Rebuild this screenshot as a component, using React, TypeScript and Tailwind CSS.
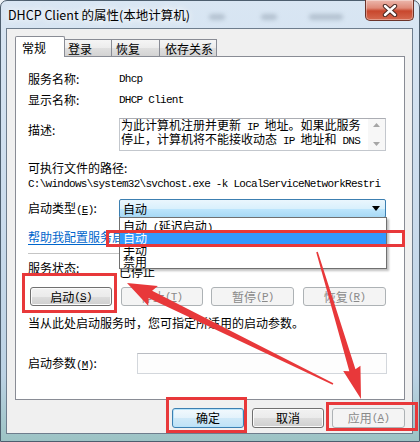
import React from "react";

const CJK = "font-['Noto_Sans_CJK_SC',sans-serif]";
const MONO = "font-['Liberation_Mono',monospace] text-[11px] tracking-[-0.73px]";

function Key({ k }: { k: string }) {
  return (
    <span className="font-['Liberation_Mono',monospace] text-[11px] tracking-[-0.8px]">
      (<span className="underline underline-offset-[1px]">{k}</span>)
    </span>
  );
}

function Btn({
  label,
  k,
  disabled,
  def,
  w,
}: {
  label: string;
  k?: string;
  disabled?: boolean;
  def?: boolean;
  w: string;
}) {
  const base =
    "flex items-center justify-center rounded-[3px] border text-[12px] leading-[16px] " + w;
  const style = disabled
    ? "border-[#adb2b5] bg-[#f4f4f4] text-[#8a8a8a]"
    : def
    ? "border-[#3c7fb1] bg-[linear-gradient(180deg,#f2f9fd_0%,#e3f2fb_50%,#cfe9f8_51%,#bfe2f6_100%)] text-black shadow-[inset_0_0_0_1px_#b8e3fa]"
    : "border-[#707070] bg-[linear-gradient(180deg,#f2f2f2_0%,#ebebeb_50%,#dddddd_51%,#cfcfcf_100%)] text-black shadow-[inset_0_0_0_1px_#fbfbfb]";
  return (
    <div className={base + " " + style}>
      <span>{label}</span>
      {k ? <Key k={k} /> : null}
    </div>
  );
}

function CloseButton() {
  return (
    <div className="-mt-px flex h-[21px] w-[49px] items-center justify-center rounded-b-[5px] border border-t-0 border-[#6b3329] bg-[linear-gradient(180deg,#ecb8ad_0%,#df8a78_40%,#c8472d_55%,#d5694f_100%)] shadow-[inset_0_0_0_1px_rgba(255,255,255,0.35)]">
      <svg width="16" height="13" viewBox="0 0 16 13">
        <path d="M3 2 L13 11 M13 2 L3 11" stroke="#4a2a24" strokeWidth="4.4" strokeLinecap="round" />
        <path d="M3 2 L13 11 M13 2 L3 11" stroke="#ffffff" strokeWidth="2.4" strokeLinecap="round" />
      </svg>
    </div>
  );
}

export default function App() {
  const arrow1 = (() => {
    const tx = 333,
      ty = 384,
      px = 127,
      py = 283;
    const L = Math.hypot(px - tx, py - ty);
    const ang = (Math.atan2(py - ty, px - tx) * 180) / Math.PI;
    const pts = `0,-0.8 ${L - 26},-4 ${L - 29},-11 ${L},0 ${L - 29},11 ${L - 26},4 0,0.8`;
    return { t: `translate(${tx} ${ty}) rotate(${ang})`, pts };
  })();
  const arrow2 = (() => {
    const tx = 317,
      ty = 252,
      px = 361,
      py = 399;
    const L = Math.hypot(px - tx, py - ty);
    const ang = (Math.atan2(py - ty, px - tx) * 180) / Math.PI;
    const pts = `0,-0.8 ${L - 30},-3.2 ${L - 32},-9 ${L},0 ${L - 32},9 ${L - 30},3.2 0,0.8`;
    return { t: `translate(${tx} ${ty}) rotate(${ang})`, pts };
  })();

  return (
    <div className={"relative h-[442px] w-[420px] overflow-hidden bg-[#eef3f7] " + CJK}>
      <div className="flex h-[442px] w-[420px] flex-col rounded-t-[7px] border border-[#4d5e6e] bg-[linear-gradient(180deg,#d9e6f3_0%,#cadbec_50%,#bcd2e4_85%,#9cc3c4_100%)]">
        {/* title bar */}
        <div className="flex h-[27px] items-start pl-[7px] pr-[5px]">
          <span className="mt-[6px] text-[12.5px] leading-[16px] text-black [text-shadow:0_0_6px_#ffffff,0_0_10px_#ffffff]">
            DHCP Client 的属性(本地计算机)
          </span>
          <div className="flex flex-1 items-start pl-[19px] pt-[13px]">
            <span className="h-[6px] w-[16px] rounded-[3px] bg-[#9aa9b8] opacity-60 blur-[2px]" />
            <span className="ml-[36px] h-[6px] w-[16px] rounded-[3px] bg-[#9aa9b8] opacity-60 blur-[2px]" />
            <span className="ml-[32px] h-[6px] w-[34px] rounded-[3px] bg-[#9aa9b8] opacity-60 blur-[2px]" />
          </div>
          <CloseButton />
        </div>

        {/* client area */}
        <div className="ml-[5px] flex h-[406px] w-[407px] flex-col border border-[#6e7d8d] bg-[#f0f0f0] pl-[8px] pr-[7px] pt-[7px] text-black">
          {/* tabs */}
          <div className="flex h-[20px] items-end text-[12px] leading-[16px]">
            <div className="relative z-10 -mb-px h-[21px] w-[50px] rounded-t-[2px] border border-b-0 border-[#898c95] bg-white pl-[6px] pt-[3px]">
              常规
            </div>
            <div className="h-[17px] w-[47px] border border-b-0 border-l-0 border-[#898c95] bg-[linear-gradient(180deg,#f5f5f5_0%,#ececec_50%,#dfdfdf_51%,#d3d3d3_100%)] pl-[3px] pt-[1px]">
              登录
            </div>
            <div className="h-[17px] w-[48px] border border-b-0 border-l-0 border-[#898c95] bg-[linear-gradient(180deg,#f5f5f5_0%,#ececec_50%,#dfdfdf_51%,#d3d3d3_100%)] pl-[4px] pt-[1px]">
              恢复
            </div>
            <div className="h-[17px] w-[57px] border border-b-0 border-l-0 border-[#898c95] bg-[linear-gradient(180deg,#f5f5f5_0%,#ececec_50%,#dfdfdf_51%,#d3d3d3_100%)] pl-[5px] pt-[1px]">
              依存关系
            </div>
          </div>

          {/* panel */}
          <div className="flex h-[344px] w-[390px] flex-col border border-[#898c95] bg-white pl-[12px] pr-[17px] text-[12px] leading-[16px]">
            <div className="mt-[14px] flex h-[16px] items-center">
              <span className="w-[91px]">服务名称:</span>
              <span className={MONO}>Dhcp</span>
            </div>
            <div className="mt-[5px] flex h-[16px] items-center">
              <span className="w-[91px]">显示名称:</span>
              <span className={MONO}>DHCP Client</span>
            </div>
            <div className="mt-[10px] flex h-[33px] items-start">
              <span className="mt-[4px] w-[91px]">描述:</span>
              <div className="flex h-[33px] w-[267px] border border-[#c3c7cd] border-t-[#abadb3] bg-white">
                <div className="flex-1 pl-[1px] text-[12px] leading-[12px]">
                  <div className="whitespace-nowrap">
                    为此计算机注册并更新<span className={MONO}> IP </span>地址。如果此服务
                  </div>
                  <div className="whitespace-nowrap">
                    停止，计算机将不能接收动态<span className={MONO}> IP </span>地址和<span className={MONO}> DNS</span>
                  </div>
                </div>
                <div className="flex w-[17px] flex-col items-center justify-between bg-[#f7f7f7] py-[4px]">
                  <svg width="7" height="4" viewBox="0 0 7 4">
                    <path d="M0 4 L3.5 0 L7 4 Z" fill="#a6a6a6" />
                  </svg>
                  <svg width="7" height="4" viewBox="0 0 7 4">
                    <path d="M0 0 L3.5 4 L7 0 Z" fill="#a6a6a6" />
                  </svg>
                </div>
              </div>
            </div>
            <div className="mt-[9px] h-[16px]">可执行文件的路径:</div>
            <div className={"h-[16px] w-[357px] overflow-hidden whitespace-nowrap leading-[16px] " + MONO}>
              C:\windows\system32\svchost.exe -k LocalServiceNetworkRestri
            </div>
            <div className="mt-[7px] flex h-[19px] items-center">
              <span className="w-[91px]">
                启动类型<Key k="E" />:
              </span>
              <div className="relative h-[19px] w-[267px]">
                <div className="flex h-[19px] w-[267px] items-center justify-between rounded-[2px] border border-[#3c7fb1] bg-[linear-gradient(180deg,#eaf6fd_0%,#d9f0fc_50%,#bee6fd_51%,#a7d9f5_100%)] pl-[3px] pr-[5px]">
                  <span>自动</span>
                  <svg width="8" height="5" viewBox="0 0 8 5">
                    <path d="M0 0 L8 0 L4 5 Z" fill="#000" />
                  </svg>
                </div>
                <div className="absolute left-0 top-[18px] z-20 flex h-[52px] w-[268px] flex-col border border-[#707070] bg-white text-[12px] leading-[12px] shadow-[2px_2px_2px_rgba(0,0,0,0.25)]">
                  <div className="h-[14px] pl-[3px] pt-[2px]">
                    自动<span className="font-['Liberation_Mono',monospace] text-[11px] tracking-[-0.8px]"> (</span>延迟启动<span className="font-['Liberation_Mono',monospace] text-[11px]">)</span>
                  </div>
                  <div className="h-[12px] bg-[#3399ff] pl-[3px] text-white">自动</div>
                  <div className="h-[12px] pl-[3px]">手动</div>
                  <div className="h-[12px] pl-[3px]">禁用</div>
                </div>
              </div>
            </div>
            <div className="mt-[11px] h-[16px] text-[#0066cc] underline underline-offset-[2px]">
              帮助我配置服务启动选项。
            </div>
            <div className="mt-[8px] h-px w-[358px] bg-[#c5c5c5]" />
            <div className="mt-[6px] flex h-[16px] items-start">
              <span className="w-[91px]">服务状态:</span>
              <span className="mt-[4px]">已停止</span>
            </div>
            <div className="ml-[2px] mt-[11px] flex h-[19px] w-[356px] justify-between">
              <Btn label="启动" k="S" w="w-[82px]" />
              <Btn label="停止" k="T" w="w-[82px]" disabled />
              <Btn label="暂停" k="P" w="w-[83px]" disabled />
              <Btn label="恢复" k="R" w="w-[83px]" disabled />
            </div>
            <div className="mt-[9px] h-[16px]">当从此处启动服务时，您可指定所适用的启动参数。</div>
            <div className="mt-[22px] flex h-[21px] items-center">
              <span className="w-[109px]">
                启动参数<Key k="M" />:
              </span>
              <div className="h-[21px] w-[250px] border border-[#d3d7dc] border-t-[#b9bcc2] bg-[#fdfdfd]" />
            </div>
          </div>

          {/* bottom buttons */}
          <div className="mt-[8px] flex h-[20px] justify-end gap-[8px]">
            <Btn label="确定" w="w-[72px]" def />
            <Btn label="取消" w="w-[72px]" />
            <Btn label="应用" k="A" w="w-[73px]" disabled />
          </div>
        </div>
      </div>

      {/* annotations */}
      <svg className="pointer-events-none absolute left-0 top-0 z-30" width="420" height="442" viewBox="0 0 420 442">
        <g fill="none" stroke="#e8383a" strokeWidth="3">
          <rect x="107.5" y="231.5" width="296" height="14" />
          <rect x="23.5" y="274.5" width="92" height="37" />
          <rect x="167.5" y="398.5" width="78" height="33" />
          <rect x="327.5" y="403.5" width="89" height="26" />
        </g>
        <g transform={arrow1.t}>
          <polygon points={arrow1.pts} fill="#e8383a" />
        </g>
        <g transform={arrow2.t}>
          <polygon points={arrow2.pts} fill="#e8383a" />
        </g>
      </svg>
    </div>
  );
}
